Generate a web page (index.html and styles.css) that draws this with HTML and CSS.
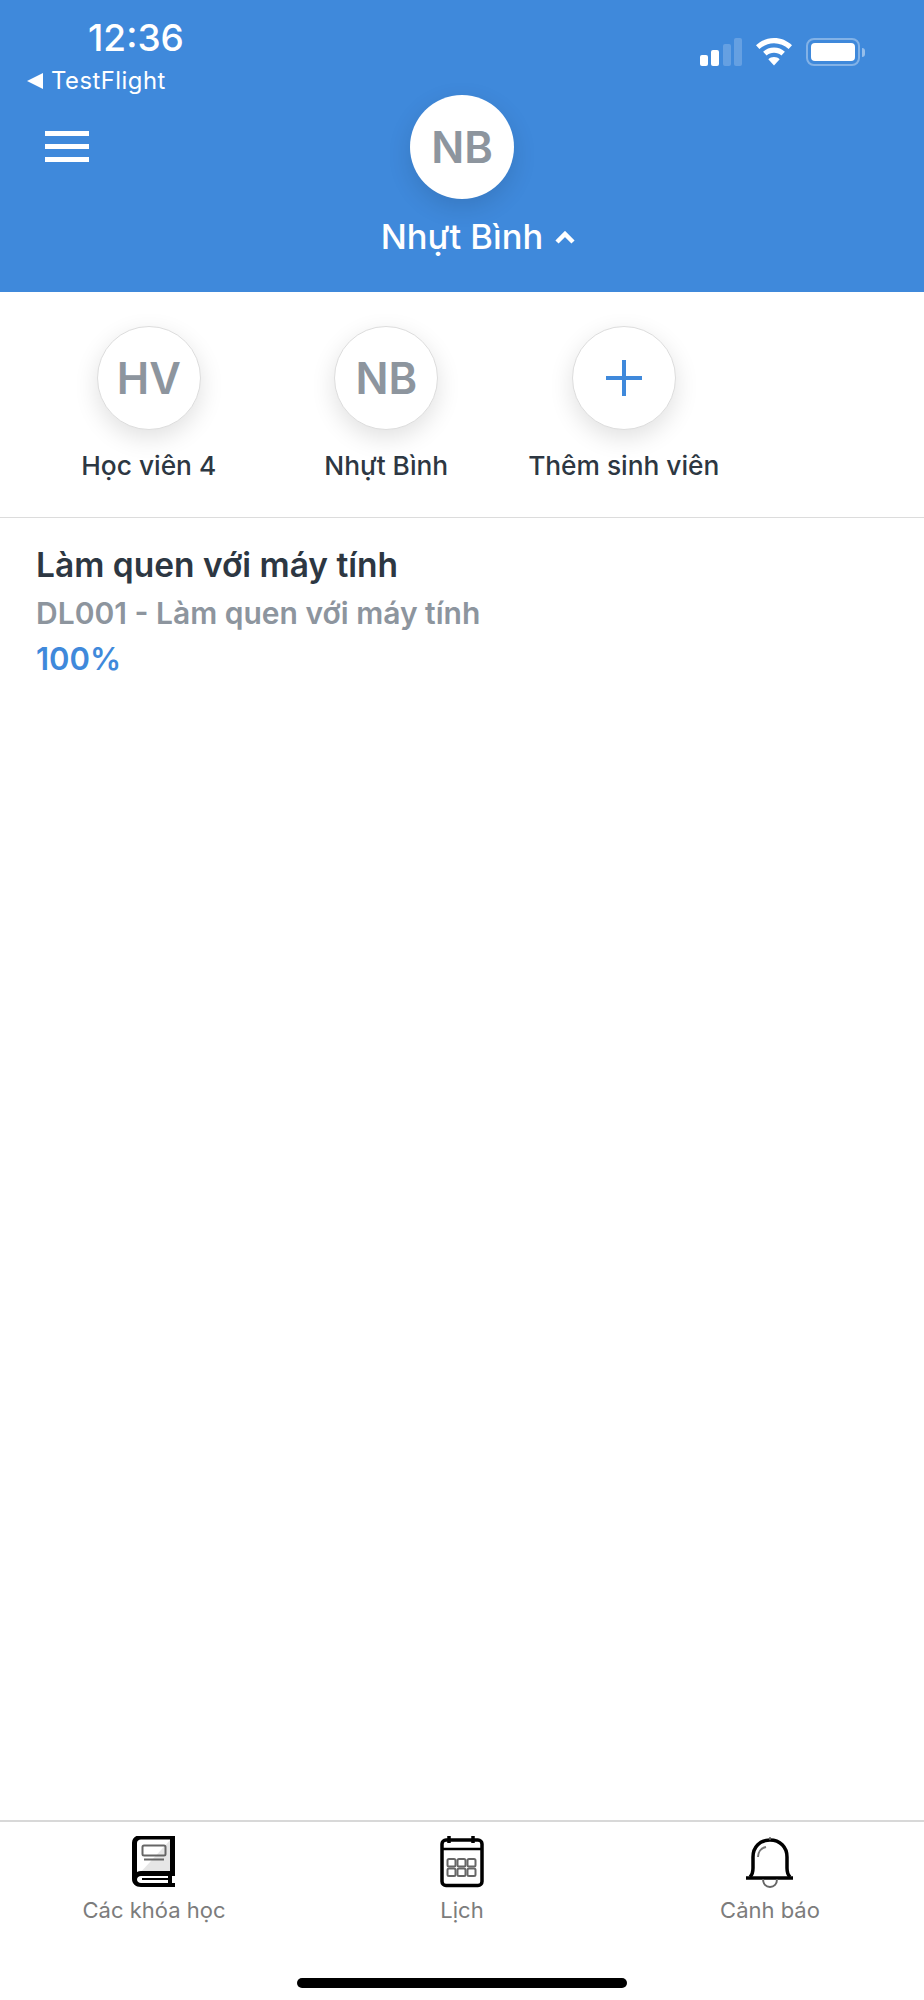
FILE: index.html
```html
<!DOCTYPE html>
<html lang="en">
<head>
    <meta charset="UTF-8">
    <meta name="viewport" content="width=device-width, initial-scale=1.0">
    <title>Các khóa học</title>
    <link rel="stylesheet" href="styles.css">
</head>
<body>
    <div class="page">
        <header class="header">
            <div class="status">
                <div class="status-left">
                    <p class="time">12:36</p>
                    <p class="back"><span class="back-arrow"></span>TestFlight</p>
                </div>
                <div class="status-right">
                    <svg class="signal" width="42" height="28" viewBox="0 0 42 28">
                        <rect x="0" y="17" width="8" height="11" rx="2" fill="#fff"/>
                        <rect x="11" y="12" width="8" height="16" rx="2" fill="#fff"/>
                        <rect x="23" y="6" width="8" height="22" rx="2" fill="#fff" fill-opacity=".2"/>
                        <rect x="34" y="0" width="8" height="28" rx="2" fill="#fff" fill-opacity=".2"/>
                    </svg>
                    <svg class="wifi" width="36" height="28" viewBox="0 0 36 28">
                        <path d="M18 0C11 0 5 2.6 0 7.200l3.400 3.800C7.500 7.300 12.500 5.200 18 5.200s10.500 2.100 14.600 5.800L36 7.200C31 2.600 25 0 18 0z" fill="#fff"/>
                        <path d="M18 9.500c-4.200 0-8 1.600-10.900 4.200l3.500 3.800c2-1.800 4.500-2.800 7.400-2.800s5.400 1 7.400 2.800l3.500-3.800C26 11.100 22.200 9.500 18 9.500z" fill="#fff"/>
                        <path d="M18 19c-2.200 0-4.200.8-5.700 2.200L18 27.500l5.700-6.300C22.200 19.800 20.200 19 18 19z" fill="#fff"/>
                    </svg>
                    <div class="battery">
                        <div class="battery-body"><div class="battery-fill"></div></div>
                        <div class="battery-cap"></div>
                    </div>
                </div>
            </div>
            <div class="profile-row">
                <div class="menu">
                    <span></span>
                    <span></span>
                    <span></span>
                </div>
                <div class="avatar avatar-top">NB</div>
            </div>
            <div class="profile-name">
                Nhựt Bình
                <svg class="chevron" width="20" height="13" viewBox="0 0 20 13">
                    <path d="M2 11l8-8 8 8" fill="none" stroke="#fff" stroke-width="4.500"/>
                </svg>
            </div>
        </header>

        <section class="students">
            <div class="student">
                <div class="avatar">HV</div>
                <p class="student-name">Học viên 4</p>
            </div>
            <div class="student">
                <div class="avatar">NB</div>
                <p class="student-name">Nhựt Bình</p>
            </div>
            <div class="student">
                <div class="avatar">
                    <svg width="38" height="38" viewBox="0 0 38 38">
                        <path d="M19 1v36M1 19h36" stroke="#3f89db" stroke-width="4" fill="none"/>
                    </svg>
                </div>
                <p class="student-name">Thêm sinh viên</p>
            </div>
        </section>

        <main class="courses">
            <h2 class="course-title">Làm quen với máy tính</h2>
            <p class="course-code">DL001 - Làm quen với máy tính</p>
            <p class="course-progress">100%</p>
        </main>

        <nav class="tabs">
            <div class="tab">
                <svg width="46" height="54" viewBox="1 2 46 54">
                    <path d="M9 40L42 4v34H9z" fill="#e6e6e6"/>
                    <path d="M45 1H11C5.500 1 2 4.500 2 9v36c0 4.500 3.500 8 9 8h34v-4h-3v-7h3V1zM7 38V9c0-2.200 1.800-3.500 4-3.500h29V37H11c-1.500 0-2.900.3-4 1zm31 11H11c-2.200 0-4-1.500-4-3.500S8.800 42 11 42h27v2H12v2h26v3z" fill="#000"/>
                    <rect x="12.500" y="11.500" width="23" height="10" rx="1.500" fill="none" stroke="#666" stroke-width="2"/>
                    <path d="M14 25.500h20" stroke="#666" stroke-width="2"/>
                </svg>
                <p class="tab-label">Các khóa học</p>
            </div>
            <div class="tab">
                <svg width="46" height="54" viewBox="0 0 46 54">
                    <rect x="3" y="4" width="40" height="45.500" rx="4" fill="none" stroke="#000" stroke-width="3.500"/>
                    <path d="M3 13h40" stroke="#000" stroke-width="2.500"/>
                    <path d="M10 0v7M34 0v7" stroke="#000" stroke-width="3.500"/>
                    <g fill="none" stroke="#666" stroke-width="2">
                        <rect x="8.500" y="23" width="8" height="7.500" rx="1.500"/>
                        <rect x="18.500" y="23" width="8" height="7.500" rx="1.500"/>
                        <rect x="28.500" y="23" width="8" height="7.500" rx="1.500"/>
                        <rect x="8.500" y="32.500" width="8" height="7.500" rx="1.500"/>
                        <rect x="18.500" y="32.500" width="8" height="7.500" rx="1.500"/>
                        <rect x="28.500" y="32.500" width="8" height="7.500" rx="1.500"/>
                    </g>
                </svg>
                <p class="tab-label">Lịch</p>
            </div>
            <div class="tab">
                <svg width="48" height="54" viewBox="0 0 48 54">
                    <path d="M0 42h47" stroke="#000" stroke-width="3.500"/>
                    <path d="M4 41c2-2 3-5 3-9V21C7 11 14 4 24 4s17 7 17 17v11c0 4 1 7 3 9" fill="none" stroke="#000" stroke-width="3.500"/>
                    <path d="M24 1v3" stroke="#666" stroke-width="1.500"/>
                    <path d="M12 21c0-5 3-9 8-10" fill="none" stroke="#777" stroke-width="2"/>
                    <path d="M17 43c0 5 3 8 7 8s7-3 7-8" fill="none" stroke="#666" stroke-width="2"/>
                </svg>
                <p class="tab-label">Cảnh báo</p>
            </div>
        </nav>

        <div class="home-bar"><span></span></div>
    </div>
</body>
</html>
```

FILE: styles.css
```css
*{
    margin:0;
    padding:0;
    box-sizing:border-box;
}
body{
    font-family:Inter, "Liberation Sans", sans-serif;
    background:#fff;
}
.page{
    display:flex;
    flex-direction:column;
    width:924px;
    height:2000px;
    overflow:hidden;
}

/* header */
.header{
    height:292px;
    background:#3f89db;
    color:#fff;
    flex-shrink:0;
}
.status{
    display:flex;
    justify-content:space-between;
    height:95px;
    padding:18px 59px 0 27px;
}
.time{
    padding-left:61px;
    font-size:37px;
    line-height:40px;
    font-weight:500;
}
.back{
    display:flex;
    align-items:center;
    font-size:23.800px;
    line-height:28px;
    margin-top:9px;
    letter-spacing:.5px;
}
.back-arrow{
    width:0;
    height:0;
    margin-right:8px;
    border-top:8px solid transparent;
    border-bottom:8px solid transparent;
    border-right:16px solid #fff;
}
.status-right{
    display:flex;
    align-items:center;
    gap:14px;
    height:28px;
    margin-top:20px;
}
.battery{
    display:flex;
    align-items:center;
}
.battery-body{
    width:54px;
    height:28px;
    padding:3px;
    border:2px solid rgba(255,255,255,.35);
    border-radius:8px;
}
.battery-fill{
    width:100%;
    height:100%;
    background:#fff;
    border-radius:4px;
}
.battery-cap{
    width:3px;
    height:9px;
    margin-left:2px;
    background:rgba(255,255,255,.45);
    border-radius:0 3px 3px 0;
}
.profile-row{
    position:relative;
    display:flex;
    justify-content:center;
    height:103px;
}
.menu{
    position:absolute;
    left:45px;
    top:36px;
    display:flex;
    flex-direction:column;
    gap:8px;
}
.menu span{
    display:block;
    width:44px;
    height:5px;
    background:#fff;
}
.profile-name{
    display:flex;
    justify-content:center;
    align-items:center;
    gap:12px;
    margin-top:20px;
    font-size:34.500px;
    line-height:38px;
    font-weight:500;
}
.chevron{
    margin-right:-32px;
}

/* round avatars */
.avatar{
    display:flex;
    align-items:center;
    justify-content:center;
    width:104px;
    height:104px;
    background:#fff;
    border:1px solid #ddd;
    border-radius:50%;
    box-shadow:0 8px 24px rgba(0,0,0,.12);
    color:#8d959e;
    font-size:43.500px;
    font-weight:600;
}
.avatar-top{
    border:none;
}

/* student list */
.students{
    display:flex;
    height:226px;
    padding:34px 0 0 30px;
    border-bottom:1px solid #dcdcdc;
    flex-shrink:0;
}
.student{
    display:flex;
    flex-direction:column;
    align-items:center;
    width:237.500px;
}
.student-name{
    margin-top:21px;
    font-size:26.300px;
    line-height:30px;
    font-weight:500;
    color:#2d3742;
    white-space:nowrap;
}

/* course */
.courses{
    flex:1;
    padding:26px 36px 0;
}
.course-title{
    font-size:33.500px;
    line-height:42px;
    font-weight:600;
    color:#2d3742;
}
.course-code{
    margin-top:7px;
    font-size:30px;
    line-height:40px;
    font-weight:600;
    color:#8d959e;
}
.course-progress{
    margin-top:6px;
    font-size:31px;
    line-height:40px;
    font-weight:600;
    color:#3f89db;
}

/* bottom tabs */
.tabs{
    display:flex;
    height:127px;
    padding-top:14px;
    border-top:2px solid #d8d8d8;
    flex-shrink:0;
}
.tab{
    flex:1;
    display:flex;
    flex-direction:column;
    align-items:center;
}
.tab svg{
    display:block;
}
.tab-label{
    margin-top:7px;
    font-size:22px;
    line-height:26px;
    color:#7c7c7c;
}
.home-bar{
    display:flex;
    justify-content:center;
    height:53px;
    padding-top:31px;
    flex-shrink:0;
}
.home-bar span{
    display:block;
    width:330px;
    height:10px;
    background:#000;
    border-radius:5px;
}
```
